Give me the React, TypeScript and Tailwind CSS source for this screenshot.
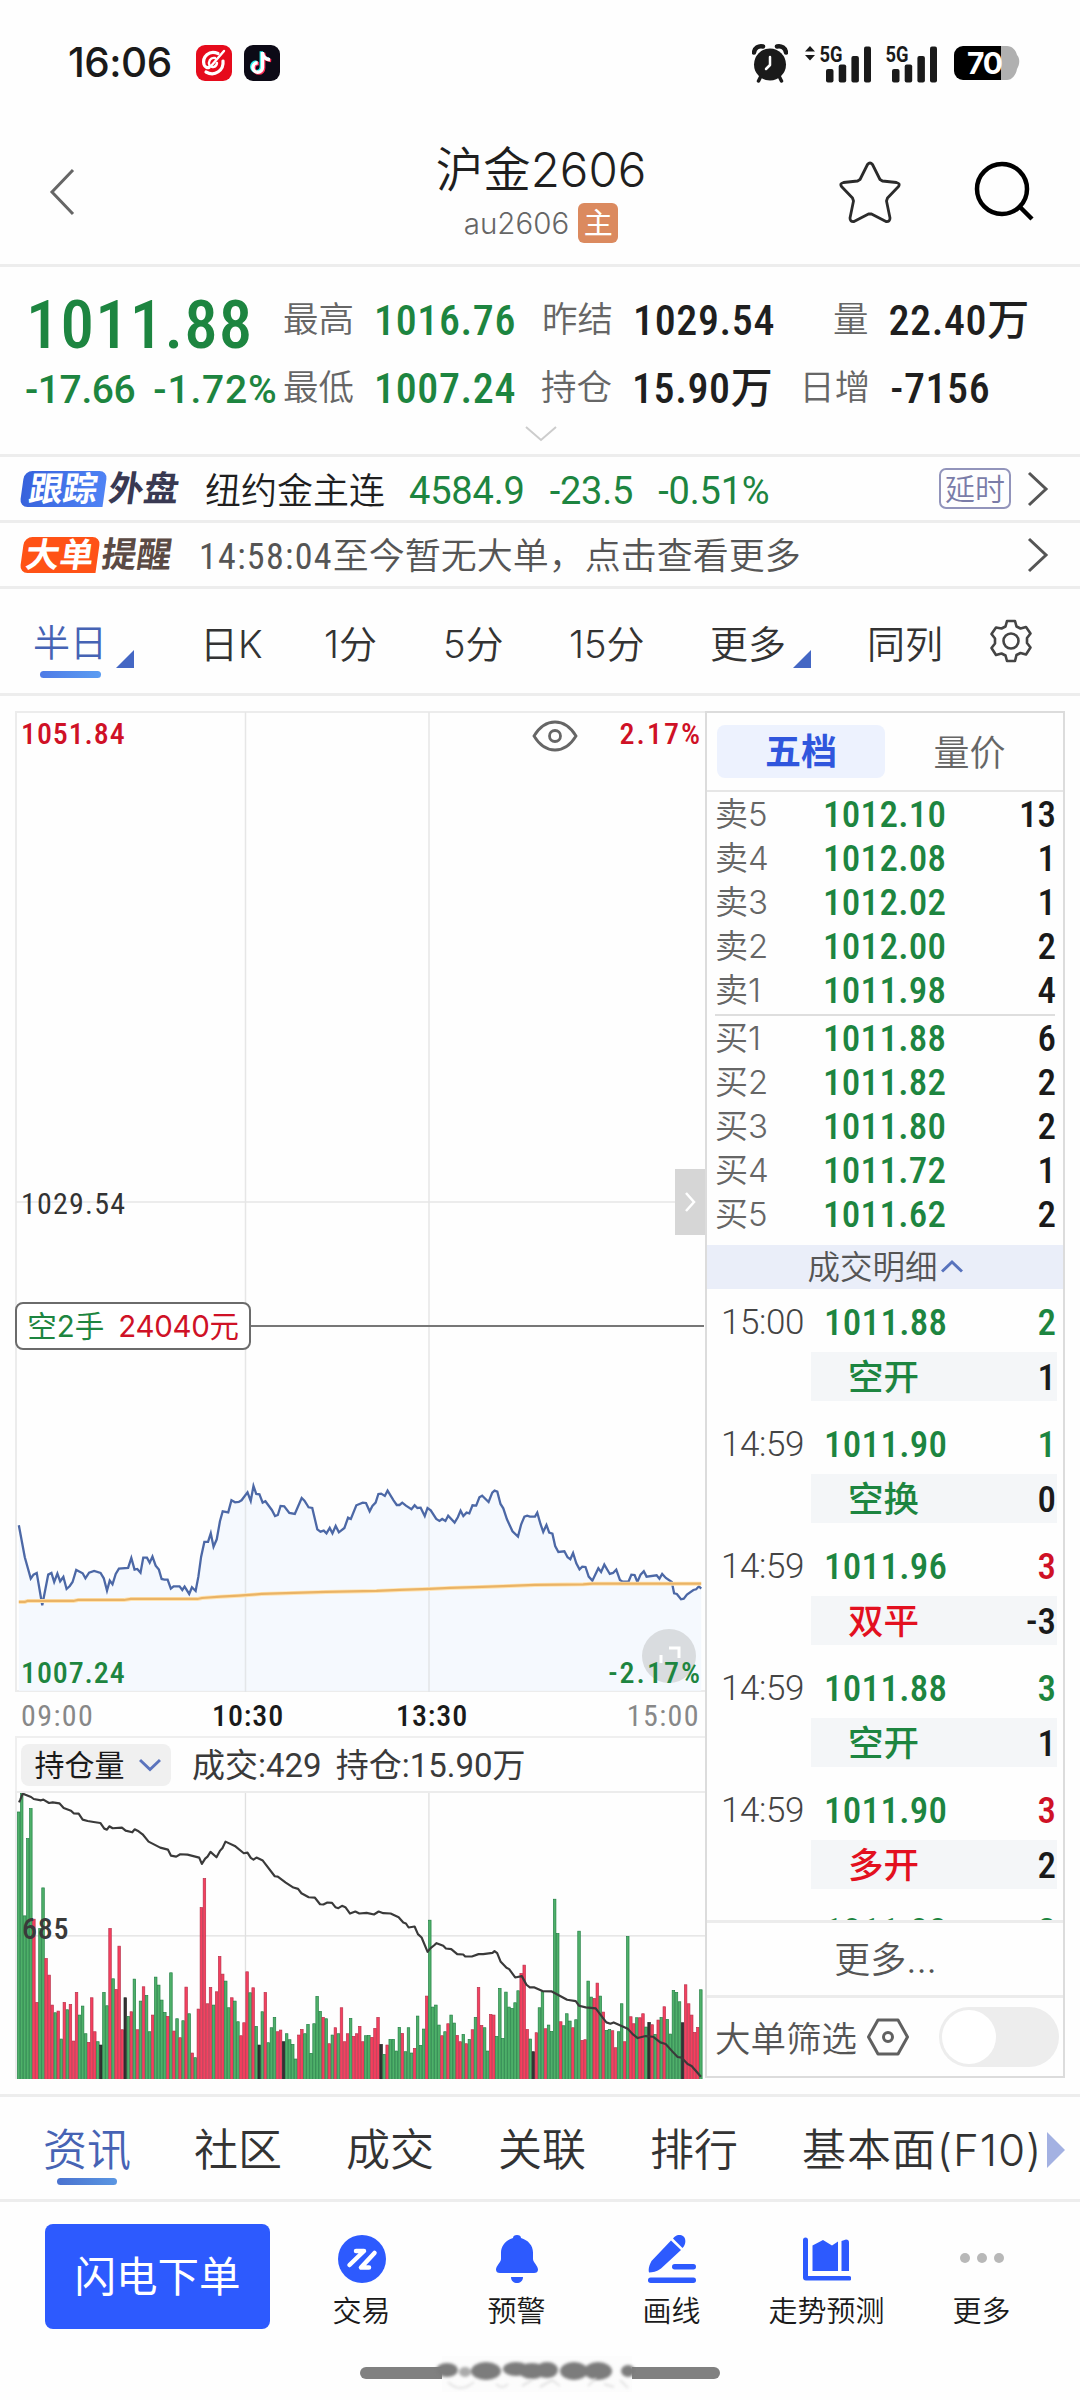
import type { ReactNode } from "react";
import clsx from "clsx";

const GREEN = "text-[#1d8540]";
const RED = "text-[#cf1126]";

interface Level {
    label: string;
    price: string;
    qty: number;
}

interface Tick {
    time: string;
    price: string;
    qty: number;
    qtyUp: boolean;
    kind: string;
    kindUp: boolean;
    change: number;
}

const sells: Level[] = [
    { label: "卖5", price: "1012.10", qty: 13 },
    { label: "卖4", price: "1012.08", qty: 1 },
    { label: "卖3", price: "1012.02", qty: 1 },
    { label: "卖2", price: "1012.00", qty: 2 },
    { label: "卖1", price: "1011.98", qty: 4 },
];

const buys: Level[] = [
    { label: "买1", price: "1011.88", qty: 6 },
    { label: "买2", price: "1011.82", qty: 2 },
    { label: "买3", price: "1011.80", qty: 2 },
    { label: "买4", price: "1011.72", qty: 1 },
    { label: "买5", price: "1011.62", qty: 2 },
];

const ticks: Tick[] = [
    { time: "15:00", price: "1011.88", qty: 2, qtyUp: false, kind: "空开", kindUp: false, change: 1 },
    { time: "14:59", price: "1011.90", qty: 1, qtyUp: false, kind: "空换", kindUp: false, change: 0 },
    { time: "14:59", price: "1011.96", qty: 3, qtyUp: true, kind: "双平", kindUp: true, change: -3 },
    { time: "14:59", price: "1011.88", qty: 3, qtyUp: false, kind: "空开", kindUp: false, change: 1 },
    { time: "14:59", price: "1011.90", qty: 3, qtyUp: true, kind: "多开", kindUp: true, change: 2 },
];

// price line, x = minute position, y = price position
const priceLine =
    "41,766 54,862 67,926 73,914 80,909 92,1006 105,914 112,909 118,936 125,911 131,934 138,921 145,957 152,948 158,936 166,900 180,910 186,925 194,908 205,903 219,909 226,925 233,962 239,932 245,943 252,912 259,896 279,894 286,864 293,899 299,897 306,908 312,863 320,863 326,878 332,860 339,887 346,899 352,927 358,929 365,929 372,956 378,949 391,949 397,960 402,950 412,972 418,952 426,963 432,920 438,860 445,816 453,816 459,790 465,830 472,808 479,754 485,724 497,727 504,691 512,697 520,696 526,691 539,667 546,693 552,648 558,672 565,673 572,698 578,694 592,720 599,738 605,735 611,708 619,709 630,729 642,732 657,684 663,692 672,712 680,714 691,778 698,785 705,782 711,790 718,774 724,790 731,768 738,787 750,774 758,743 764,747 776,706 790,698 797,699 805,724 811,708 818,698 824,672 830,671 838,678 844,662 857,691 864,705 870,705 876,698 884,707 896,718 903,706 909,714 916,713 925,738 931,714 938,721 950,747 957,753 963,747 970,753 976,737 990,758 997,742 1003,722 1009,738 1016,728 1022,730 1029,706 1037,707 1044,682 1050,677 1064,696 1072,668 1077,662 1083,665 1090,702 1096,715 1104,748 1116,784 1128,800 1135,763 1142,740 1148,737 1154,740 1165,740 1170,728 1177,762 1183,786 1190,765 1196,788 1203,791 1209,828 1216,846 1229,844 1236,862 1242,868 1248,849 1255,880 1262,898 1268,890 1275,891 1282,920 1290,932 1303,895 1309,906 1316,884 1328,912 1335,909 1342,899 1350,930 1356,935 1369,934 1375,914 1382,915 1388,936 1395,914 1402,904 1408,920 1430,916 1436,926 1442,912 1450,924 1463,936 1468,970 1474,972 1483,988 1489,986 1496,974 1510,960 1516,958 1522,949 1527,956";

const averageLine =
    "41,996 54,996 60,993 160,993 170,990 270,990 285,987 430,987 440,984 480,980 520,977 570,972 640,969 710,966 820,963 870,960 935,957 980,954 1050,951 1110,948 1165,945 1270,943 1290,941 1527,941";

const interestLine =
    "56,212 60,203 67,186 75,189 92,196 100,202 122,206 129,204 146,214 157,212 177,215 190,229 212,237 220,245 235,246 247,264 262,268 280,271 300,274 312,291 320,294 327,284 337,290 365,288 376,297 396,302 403,293 415,299 427,308 445,330 480,348 503,354 512,372 528,375 540,368 562,369 597,378 605,397 615,381 622,375 631,361 649,377 660,357 667,349 676,330 704,343 731,365 742,363 752,379 760,384 769,378 788,387 824,434 833,435 857,453 880,468 894,472 904,485 926,497 944,498 960,518 970,519 982,513 996,514 1006,527 1015,530 1026,523 1036,527 1050,546 1066,540 1078,546 1100,544 1122,549 1136,540 1150,545 1172,546 1196,557 1210,573 1218,576 1226,588 1244,585 1254,608 1265,618 1283,661 1292,650 1302,642 1310,635 1330,643 1338,651 1354,653 1372,668 1390,669 1396,675 1416,675 1436,668 1450,668 1478,664 1484,659 1492,665 1502,690 1520,709 1528,713 1546,738 1566,734 1580,760 1590,768 1604,768 1628,779 1656,780 1702,805 1728,809 1738,823 1758,828 1788,831 1810,860 1820,873 1832,877 1842,873 1864,883 1884,892 1900,909 1914,920 1938,914 1960,916 1982,933 1998,938 2018,960 2034,977 2046,979 2064,998 2076,1004 2104,1036";

// one entry per minute: top of the bar + colour (g down, r up, k flat)
const volumes = (
    "240g 185g 552g 320g 230g 562r 812r 590g 468g 680r 730r 820r 843g 838r 922g 812r 834g 818r 928r 782r 850g 823g 906g 932r 798r 900r 930g 940k 782g 822g " +
    "590r 741g 773r 643r 894r 798k 854g 840r 742g 894r 808g 765r 791g 900g 850r 736g 760g 805g 842g 854r 723g 898r 861g 918r 867g 766r 846g 964r 978g 832r " +
    "527r 440r 816r 767r 820g 780r 674r 727r 748g 828g 798r 808g 870g 912r 873r 720r 783g 768r 884g 940k 840g 782r 933g 888g 857g 900r 895r 930k 906g 924g " +
    "938g 982g 910r 893r 906g 878g 965g 876g 794g 839g 857r 861g 936r 910g 888r 906g 828r 930r 906r 860g 914r 906r 884r 930r 912g 911g 917r 890r 857r 938k " +
    "968g 940r 923g 923g 958g 887g 905r 960g 888g 964g 950r 853g 941g 892g 793r 565g 826g 820g 880g 912r 900g 876r 850g 874g 911r 930r 908g 936r 923g 894r " +
    "857g 767r 881r 888g 958g 848r 850r 914g 770g 920g 781g 826g 830g 813g 777g 725r 700r 893r 922g 960k 903r 828g 780g 891r 880g 899g 502g 605g 870r 882g " +
    "846g 868g 888r 864g 598g 926r 924r 748g 796g 800r 754r 793g 841r 896g 893g 897r 948r 900g 816g 930r 614g 855r 876r 858g 858r 846r 886g 872k 879r 908g " +
    "865r 857g 825r 863g 907g 776g 782g 810g 873k 759r 816r 850r 902r 887r 774g"
).split(" ");

function Signal({ arrows }: { arrows?: boolean }) {
    return (
        <svg width="66" height="40" viewBox="0 0 66 40" fill="#1a1a1a">
            {arrows && <path d="M0 8.5 5 3l5 5.5zM0 12h10l-5 5.5z" />}
            <text x="14.500" y="18.500" fontFamily="Roboto" fontSize="22" fontWeight="700" textLength="23" lengthAdjust="spacingAndGlyphs">5G</text>
            <rect x="21" y="26" width="7.5" height="13.5" rx="2" />
            <rect x="33.7" y="21.5" width="7.5" height="18" rx="2" />
            <rect x="46.4" y="13" width="7.5" height="26.5" rx="2" />
            <rect x="59" y="3.5" width="7" height="36" rx="2" />
        </svg>
    );
}

function StatusBar() {
    return (
        <div className="flex h-[126px] items-center pl-[68px] pr-[60px]">
            <div className="w-[128px] text-[40.500px] font-[550] tracking-[-0.5px] text-[#1a1a1a]">16:06</div>
            <svg width="36" height="36" viewBox="0 0 36 36" className="mr-3">
                <rect width="36" height="36" rx="9" fill="#e60b1c" />
                <g fill="none" stroke="#fff" strokeWidth="3.2" strokeLinecap="round">
                    <path d="M22 8.500C13 4.500 6 12 8 19.500c1 3 3.500 3.500 5 3" />
                    <path d="M10 27c9 5 18-2 17-11" />
                    <path d="M19 13c-5-1-7 4-5.500 7.500 2.500 3 7 1.500 7.500-2.500M28 6 15 21" strokeWidth="2.400" />
                </g>
            </svg>
            <svg width="36" height="36" viewBox="0 0 36 36">
                <rect width="36" height="36" rx="9" fill="#0c0a16" />
                <g fill="none" strokeWidth="3.4">
                    <path d="M18.500 7v15.500a4.800 4.800 0 1 1-4.800-4.800M18.500 8c.6 4 3.600 6.500 7.500 6.800" stroke="#25f4ee" transform="translate(-1.200 -.8)" />
                    <path d="M18.500 7v15.500a4.800 4.800 0 1 1-4.800-4.800M18.500 8c.6 4 3.600 6.500 7.500 6.800" stroke="#fe2c55" transform="translate(1.200 .8)" />
                    <path d="M18.500 7v15.500a4.800 4.800 0 1 1-4.800-4.800M18.500 8c.6 4 3.600 6.500 7.500 6.800" stroke="#fff" />
                </g>
            </svg>
            <div className="ml-auto flex items-center">
                <svg width="36" height="40" viewBox="0 0 36 40" className="mr-[17px]">
                    <circle cx="18" cy="21.500" r="16" fill="#1a1a1a" />
                    <path d="M2 9.500C2.500 5 6.500 2.500 11 3.500M34 9.500C33.500 5 29.500 2.500 25 3.500" stroke="#1a1a1a" strokeWidth="4.500" strokeLinecap="round" fill="none" />
                    <path d="m9 33-2.500 5M27 33l2.500 5" stroke="#1a1a1a" strokeWidth="3.500" strokeLinecap="round" />
                    <path d="M18 14v8l-4 4" stroke="#fff" strokeWidth="2.500" fill="none" strokeLinecap="round" strokeLinejoin="round" />
                </svg>
                <Signal arrows />
                <Signal />
                <svg width="66" height="40" viewBox="0 0 66 40" className="ml-[17px]">
                    <path d="M47 3h6c5 0 9 4 10 9 3 3 3 9 0 14-1 6-5 11-10 11h-6z" fill="#b0b0b0" />
                    <path d="M9 3h38v34H9a9 9 0 0 1-9-9V12a9 9 0 0 1 9-9z" fill="#000" />
                    <text x="13" y="30.500" fontFamily="Inter" fontSize="30" fontWeight="700" fill="#fff" textLength="36">70</text>
                </svg>
            </div>
        </div>
    );
}

function Header() {
    return (
        <div className="relative flex h-[141px] items-center justify-between border-b-3 border-[#ededed] pl-[48px] pr-[44px]">
            <svg width="28" height="50" viewBox="0 0 28 50" fill="none" stroke="#666" strokeWidth="3" className="mt-[-6px]">
                <path d="M25 3 4 25l21 22" />
            </svg>
            <div className="absolute inset-x-0 top-[10px] flex flex-col items-center pl-[2px]">
                <div className="text-[47.500px] font-[350] leading-[68px] text-[#1f1f1f]">沪金2606</div>
                <div className="-mt-px flex items-center gap-[9px]">
                    <span className="text-[29.500px] font-[350] leading-[40px] text-[#666]">au2606</span>
                    <span className="flex h-[40px] w-[40px] items-center justify-center rounded-[6px] bg-[#db8a5f] text-[29px] leading-none text-white">主</span>
                </div>
            </div>
            <div className="-mt-[6px] flex items-center gap-[73px]">
                <svg width="62" height="62" viewBox="0 0 62 62" fill="none" stroke="#2b2b2b" strokeWidth="2.800" strokeLinejoin="round">
                    <path d="M28.500 3.500q2.500-3 5 0l7.500 15 2.500 1.500 14 1.500q4 1 2 4L48.500 37l-1 3 3.500 17q0 4-4 3.500L32.500 53h-3L15 60.500q-4 .5-4-3.500l3.500-17-1-3L2.500 25.500q-2-3 2-4l14-1.500 2.500-1.500z" />
                </svg>
                <svg width="62" height="62" viewBox="0 0 62 62" fill="none" stroke="#000" strokeWidth="4.500">
                    <circle cx="28" cy="28" r="25" />
                    <path d="m46 46 12 12" />
                </svg>
            </div>
        </div>
    );
}

function Stat({ label, value, tone, className }: { label: string; value: string; tone?: string; className?: string }) {
    return (
        <div className={clsx("flex items-center justify-end gap-[20px]", className)}>
            <span className="text-[35.500px] font-[350] text-[#666]">{label}</span>
            <span className={clsx("text-[42px] font-medium tracking-[0.6px] [font-stretch:87.5%]", tone ?? "text-[#1f1f1f]")}>{value}</span>
        </div>
    );
}

function Quote() {
    return (
        <div className="relative flex h-[190px] border-b-3 border-[#ededed] font-[Roboto,'Noto_Sans_CJK_SC',sans-serif] leading-none">
            <div className={clsx("w-[282px] shrink-0", GREEN)}>
                <div className="mt-[26px] pl-[26px] text-[67px] font-[550] leading-[64px] tracking-[1.100px] [font-stretch:87.5%]">1011.88</div>
                <div className="mt-[13px] flex gap-[18px] whitespace-nowrap pl-[25px] text-[39px] font-medium leading-[40px]">
                    <span className="tracking-[-0.4px]">-17.66</span>
                    <span className="tracking-[0.8px]">-1.72%</span>
                </div>
            </div>
            <div className="mt-[22px] flex flex-col gap-[4px]">
                <div className="flex h-[64px]">
                    <Stat className="w-[234px]" label="最高" value="1016.76" tone={GREEN} />
                    <Stat className="ml-[25px] w-[234px]" label="昨结" value="1029.54" />
                    <Stat className="ml-[58px]" label="量" value="22.40万" />
                </div>
                <div className="flex h-[64px]">
                    <Stat className="w-[234px]" label="最低" value="1007.24" tone={GREEN} />
                    <Stat className="ml-[25px]" label="持仓" value="15.90万" />
                    <Stat className="ml-[26px]" label="日增" value="-7156" />
                </div>
            </div>
            <svg width="34" height="18" viewBox="0 0 34 18" fill="none" stroke="#ccc" strokeWidth="2" className="absolute bottom-[11px] left-[524px]">
                <path d="m2 2 15 13L32 2" />
            </svg>
        </div>
    );
}

function Arrow() {
    return (
        <svg width="24" height="38" viewBox="0 0 24 38" fill="none" stroke="#555" strokeWidth="3">
            <path d="m3 3 17 16L3 35" />
        </svg>
    );
}

function NewsRow({ tag, rest, tagClass, restClass, children }: { tag: string; rest: string; tagClass: string; restClass: string; children: ReactNode }) {
    return (
        <div className="flex h-[66px] items-center border-b-3 border-[#ededed] pl-[22px] pr-[30px]">
            <span className={clsx("flex h-[36px] shrink-0 -skew-x-8 items-center justify-center rounded-l-[8px] rounded-tr-[8px] text-[34px] font-bold leading-none text-white", tagClass)}>{tag}</span>
            <span className={clsx("ml-[4px] shrink-0 -skew-x-8 text-[35px] font-bold leading-none", restClass)}>{rest}</span>
            {children}
            <Arrow />
        </div>
    );
}

function Corner() {
    return (
        <svg width="18" height="18" viewBox="0 0 18 18" fill="#4467c4" className="absolute -right-[25px] bottom-[-4px]">
            <path d="M18 0v18H0z" />
        </svg>
    );
}

function PeriodTabs() {
    return (
        <div className="flex h-[107px] items-center border-b-3 border-[#ededed] pl-[33px] pr-[47px] pt-[5px] text-[38px] font-[350] leading-[40px] text-[#333]">
            <div className="relative w-[167px]">
                <div className="relative w-[76px] text-[37px] text-[#4663b4]">
                    半日
                    <Corner />
                    <div className="absolute -bottom-[14px] left-[7px] h-[7px] w-[61px] rounded-full bg-linear-to-r from-[#4f7be6] to-[#5a9cf2]" />
                </div>
            </div>
            <div className="w-[124px] whitespace-nowrap">日K</div>
            <div className="w-[119px]">1分</div>
            <div className="w-[126px]">5分</div>
            <div className="w-[141px]">15分</div>
            <div className="relative w-[76px]">
                更多
                <Corner />
            </div>
            <div className="ml-[81px] w-[78px]">同列</div>
            <svg width="44" height="44" viewBox="0 0 44 44" fill="none" stroke="#444" strokeWidth="2.600" strokeLinejoin="round" className="ml-auto mt-[-5px]">
                <path d="M18 2h8l1.500 5.500 4 2 5.500-1.500 4.500 6.500-3.500 4.500v5l3.500 4.500-4.500 7-5.500-1.500-4 2L26 42h-8l-1.500-5.500-4-2L7 36l-4.500-7L6 24.500v-5L2.500 15 7 8.500l5.500 1 4-2z" />
                <circle cx="22" cy="22" r="7.500" />
            </svg>
        </div>
    );
}

function PriceChart() {
    return (
        <div className="relative h-[981px] border-y-2 border-l-2 border-[#ececec]">
            <svg width="688" height="981" viewBox="16 711 688 981" className="absolute -left-px -top-[2px]">
                <g stroke="#e6e6e6" strokeWidth="1.500">
                    <path d="M245.500 712v980M429 712v980M16 1202h688" />
                </g>
                <g transform="translate(0 1270) scale(.4592 .3333)">
                    <polygon points={`41,1263 ${priceLine} 1527,1263`} fill="#f3f8fe" fillOpacity=".85" />
                </g>
                <path d="M245.500 1480v212M429 1480v212" stroke="#e3e6e9" strokeWidth="1.500" />
                <g transform="translate(0 1270) scale(.4592 .3333)" fill="none">
                    <polyline points={priceLine} stroke="#4c68a6" strokeWidth="2.300" vectorEffect="non-scaling-stroke" />
                    <polyline points={averageLine} stroke="#ffe3b0" strokeWidth="4" vectorEffect="non-scaling-stroke" />
                    <polyline points={averageLine} stroke="#eab365" strokeWidth="2.200" vectorEffect="non-scaling-stroke" />
                </g>
                <path d="M250 1326h454" stroke="#777" strokeWidth="1.800" />
                <g>
                    <circle cx="669" cy="1656" r="27" fill="#d9dcdf" />
                    <path d="M669 1648h10v10M661 1655v8" stroke="#fff" strokeWidth="3" fill="none" />
                </g>
                <g fill="none" stroke="#666" strokeWidth="2.800">
                    <path d="M534 736q8.500-14 21-14t21 14q-8.500 14-21 14t-21-14z" />
                    <circle cx="555" cy="736" r="5.500" />
                </g>
            </svg>
            <div className="absolute left-[4px] right-[3px] top-[4px] flex justify-between font-[Roboto] text-[30px] font-medium leading-[34px] tracking-[0.900px] [font-stretch:87.5%]">
                <span className={RED}>1051.84</span>
                <span className={clsx("tracking-[2px]", RED)}>2.17%</span>
            </div>
            <div className="absolute left-[4px] top-[474px] font-[Roboto] text-[30px] leading-[34px] tracking-[1.200px] text-[#333] [font-stretch:87.5%]">1029.54</div>
            <div className="absolute right-0 top-[456px] flex h-[66px] w-[30px] items-center justify-center bg-[#d6d6d6]">
                <svg width="14" height="22" viewBox="0 0 14 22" fill="none" stroke="#fff" strokeWidth="2.500"><path d="m3 2 8 9-8 9" /></svg>
            </div>
            <div className="absolute -left-[2px] top-[589px] flex h-[48px] w-[236px] items-center justify-center gap-[14px] whitespace-nowrap rounded-[8px] border-2 border-[#6b6b6b] bg-white pt-px text-[29.500px] leading-none">
                <span className={GREEN}>空2手</span>
                <span className={clsx("tracking-[-0.3px]", RED)}>24040元</span>
            </div>
            <div className={clsx("absolute bottom-0 left-[4px] right-[3px] flex justify-between font-[Roboto] text-[30px] font-medium leading-[34px] tracking-[0.900px] [font-stretch:87.5%]", GREEN)}>
                <span>1007.24</span>
                <span className="tracking-[2px]">-2.17%</span>
            </div>
        </div>
    );
}

function VolumeChart() {
    const bar: Record<string, [string, string]> = {
        g: ["#4fb06a", "#1f7f42"],
        r: ["#f5405f", "#b8304a"],
        k: ["#333", "#222"],
    };
    return (
        <div className="relative h-[288px] border-l-2 border-t-2 border-[#ececec]">
            <svg width="688" height="286" viewBox="51 184 2064 859" className="block">
                <path d="M736 184v859M1287 184v859M48 613h2070" stroke="#e0e0e0" strokeWidth="4" />
                {volumes.map((v, i) => {
                    const top = parseInt(v);
                    const [fill, edge] = bar[v.slice(-1)];
                    return <rect key={i} x={51 + i * 9.147} y={top + 1} width="7.600" height={1043 - top} fill={fill} stroke={edge} strokeWidth="2" />;
                })}
                <polyline points={interestLine} fill="none" stroke="#3a3a3a" strokeWidth="6.500" strokeLinejoin="round" />
            </svg>
            <div className="absolute left-[5px] top-[119px] font-[Roboto] text-[30px] font-medium leading-[34px] tracking-[0.8px] text-[#3a3a3a] [font-stretch:87.5%]">685</div>
        </div>
    );
}

function Levels({ rows }: { rows: Level[] }) {
    return (
        <>
            {rows.map((row) => (
                <div key={row.label} className="flex h-[44px] items-center pl-[8px] pr-[7px] leading-none">
                    <span className="w-[108px] text-[33px] font-[350] text-[#666]">{row.label}</span>
                    <span className={clsx("font-[Roboto] text-[37px] font-medium tracking-[0.3px] [font-stretch:87.5%]", GREEN)}>{row.price}</span>
                    <span className="ml-auto font-[Roboto] text-[37px] font-medium text-[#1a1a1a] [font-stretch:87.5%]">{row.qty}</span>
                </div>
            ))}
        </>
    );
}

function OrderBook() {
    return (
        <div className="flex h-[1367px] w-[360px] flex-col border-2 border-[#dcdcdc]">
            <div className="flex h-[79px] shrink-0 items-center border-b-2 border-[#e6e6e6] pl-[10px] text-[36px] leading-none">
                <div className="flex h-[53px] w-[168px] items-center justify-center rounded-[8px] bg-[#edf2fe] pt-px font-bold text-[#3056dd]">五档</div>
                <div className="flex flex-1 items-center justify-center pr-[9px] pt-[3px] font-[350] text-[#666]">量价</div>
            </div>
            <Levels rows={sells} />
            <div className="mx-[8px] mt-[2px] h-[2px] bg-[#dedede]" />
            <div className="pb-[9px]">
                <Levels rows={buys} />
            </div>
            <div className="flex h-[44px] shrink-0 items-center justify-center gap-[3px] bg-[#eaeef9] pt-[3px] text-[32.500px] font-[350] leading-none text-[#555]">
                成交明细
                <svg width="22" height="14" viewBox="0 0 22 14" fill="none" stroke="#5873bd" strokeWidth="3" className="mt-[-6px]"><path d="M1 12.500 11 3l10 9.500" /></svg>
            </div>
            <div className="h-[631px] shrink-0 overflow-hidden pt-[3px]">
                {ticks.map((t, i) => (
                    <div key={i} className="h-[122px] pl-[14px] pr-[6px] pt-[8px] leading-none">
                        <div className="flex h-[44px] items-center pr-px">
                            <span className="w-[103px] font-[Roboto] text-[35px] font-light tracking-[-0.4px] text-[#444]">{t.time}</span>
                            <span className={clsx("font-[Roboto] text-[37px] font-medium tracking-[0.3px] [font-stretch:87.5%]", GREEN)}>{t.price}</span>
                            <span className={clsx("ml-auto font-[Roboto] text-[37px] font-medium [font-stretch:87.5%]", t.qtyUp ? RED : GREEN)}>{t.qty}</span>
                        </div>
                        <div className="ml-[90px] mt-[8px] flex h-[49px] items-center bg-[#f4f6f8] pl-[37px] pr-px pt-[2px]">
                            <span className={clsx("text-[35.500px] font-medium", t.kindUp ? "text-[#e3101f]" : GREEN)}>{t.kind}</span>
                            <span className="ml-auto font-[Roboto] text-[37px] font-medium text-[#1a1a1a] [font-stretch:87.5%]">{t.change}</span>
                        </div>
                    </div>
                ))}
                <div className="flex h-[44px] items-center pl-[14px] pr-[7px] pt-[14px] font-[Roboto] text-[37px] font-medium leading-none [font-stretch:87.5%]">
                    <span className={clsx("ml-[103px] tracking-[0.3px]", GREEN)}>1011.88</span>
                    <span className={clsx("ml-auto", GREEN)}>2</span>
                </div>
            </div>
            <div className="flex h-[78px] shrink-0 items-center justify-center border-y-3 border-[#ececec] pl-px pt-px text-[36px] font-[350] leading-none text-[#555]">更多...</div>
            <div className="flex flex-1 items-center pl-[8px] pr-[4px]">
                <span className="pt-[5px] text-[35.500px] font-[350] leading-none text-[#555]">大单筛选</span>
                <svg width="42" height="38" viewBox="0 0 42 38" fill="none" stroke="#606060" strokeWidth="3" className="ml-[10px]">
                    <path d="M11 2h20l9.500 17L31 36H11L1.500 19z" strokeLinejoin="round" />
                    <circle cx="21" cy="19" r="4.500" />
                </svg>
                <div className="ml-auto h-[60px] w-[120px] rounded-full bg-[#ededed] p-[3px]">
                    <div className="h-[54px] w-[54px] rounded-full bg-white" />
                </div>
            </div>
        </div>
    );
}

function InfoTabs() {
    return (
        <div className="mt-[15px] flex h-[108px] items-center border-y-3 border-[#ededed] pl-[43px] pt-[3px] text-[44px] font-[350] leading-[50px] text-[#333]">
            <div className="relative w-[151px] text-[#4663b4]">
                资讯
                <div className="absolute -bottom-[10px] left-[14px] h-[7px] w-[60px] rounded-full bg-linear-to-r from-[#4a72cf] to-[#5a96e2]" />
            </div>
            <div className="w-[152px]">社区</div>
            <div className="w-[152px]">成交</div>
            <div className="w-[152px]">关联</div>
            <div className="w-[152px]">排行</div>
            <div className="whitespace-nowrap tracking-[0.9px]">基本面(F10)</div>
            <svg width="18" height="36" viewBox="0 0 18 36" fill="#a3b1e2" className="ml-auto mr-[15px] shrink-0"><path d="M0 0l18 18L0 36z" /></svg>
        </div>
    );
}

function Action({ label, children }: { label: string; children: ReactNode }) {
    return (
        <div className="flex w-[155px] flex-col items-center">
            <svg width="48" height="48" viewBox="0 0 48 48" fill="#2d5afe">{children}</svg>
            <span className="mt-[10px] whitespace-nowrap text-[29px] font-[350] leading-[38px] text-[#1a1a1a]">{label}</span>
        </div>
    );
}

function BottomBar() {
    return (
        <div className="flex h-[148px] pl-[45px] pt-[22px]">
            <button className="h-[105px] w-[225px] rounded-[8px] bg-[#2d5afe] pt-[2px] text-[41.500px] leading-none text-white">闪电下单</button>
            <div className="ml-[14px] flex pt-[11px]">
                <Action label="交易">
                    <circle cx="24" cy="24" r="24" />
                    <path d="M18 16h8L11.500 30M36.500 18 23 32.500h8" fill="none" stroke="#fff" strokeWidth="4.500" strokeLinecap="round" strokeLinejoin="round" />
                </Action>
                <Action label="预警">
                    <path d="M24 0c2.500 0 4 1.200 4 3 7 2 12 7.500 12 14.500V24c0 3 5 7 5 10.500 0 2.500-1.500 3.500-4 3.500H7c-2.500 0-4-1-4-3.500C3 31 8 27 8 24v-6.500C8 10.500 13 5 20 3c0-1.800 1.500-3 4-3zM18 42h12c0 8-12 8-12 0z" />
                </Action>
                <Action label="画线">
                    <path d="M23 5.500 33 15 13 33.500C9 36.500 4 37.500 1 37.500 0 34 1.500 29.500 3.500 26zM25 3.500c4-5 9-4 11-1.500s2 7-1.500 11z" />
                    <rect x="24" y="29" width="24" height="5.500" rx="2.700" />
                    <rect x="0" y="42.500" width="48" height="5.500" rx="2.700" />
                </Action>
                <Action label="走势预测">
                    <path d="M0 5a2.500 2.500 0 0 1 5 0v36h41a2.300 2.300 0 0 1 0 4.600H3a3 3 0 0 1-3-3z" />
                    <path d="M9.500 10.500 20 5l9 5.500L35 6.500v29.500H9.500z" />
                    <path d="M38.500 6 43 4.500q3 0 3 3V36h-7.500z" />
                </Action>
                <Action label="更多">
                    <g fill="#b8b8b8">
                        <circle cx="7" cy="23" r="5" />
                        <circle cx="24" cy="23" r="5" />
                        <circle cx="41" cy="23" r="5" />
                    </g>
                </Action>
            </div>
        </div>
    );
}

function HomeBar() {
    return (
        <svg width="1080" height="50" viewBox="0 0 1080 50">
            <defs>
                <filter id="soft" x="-10%" y="-50%" width="120%" height="200%"><feGaussianBlur stdDeviation="1.800" /></filter>
            </defs>
            <rect x="360" y="17" width="360" height="12" rx="6" fill="#808080" />
            <rect x="442" y="6" width="190" height="36" fill="#fcfcfc" />
            <g fill="#7c7c7c" filter="url(#soft)">
                <ellipse cx="447" cy="20" rx="11" ry="7" />
                <ellipse cx="465" cy="22" rx="6" ry="5" fill="#aaa" />
                <ellipse cx="486" cy="21" rx="15" ry="9" />
                <ellipse cx="516" cy="19" rx="13" ry="7" />
                <ellipse cx="532" cy="21" rx="13" ry="8" />
                <ellipse cx="547" cy="20" rx="11" ry="8" />
                <ellipse cx="574" cy="21" rx="14" ry="9" />
                <ellipse cx="598" cy="21" rx="14" ry="9" />
                <ellipse cx="628" cy="21" rx="7" ry="6" />
            </g>
            <g fill="none" stroke="#d8d8d8" strokeWidth="1.500" filter="url(#soft)">
                <path d="M448 32q12 12 26 0M496 34q6 6 12 0M522 36l10-6M540 37l12-7 8 6M588 36l8-8M604 34l10 3M620 30l8 8" />
            </g>
        </svg>
    );
}

export default function App() {
    return (
        <div className="h-[2400px] w-[1080px] overflow-hidden bg-[#fefefe] font-[Inter,'Noto_Sans_CJK_SC',sans-serif]">
            <StatusBar />
            <Header />
            <Quote />
            <NewsRow tag="跟踪" rest="外盘" tagClass="w-[83px] bg-linear-to-r from-[#3762dc] to-[#4f83f5]" restClass="text-[#393952]">
                <span className="ml-[26px] pt-[5px] text-[36px] font-[350] text-[#1f1f1f]">纽约金主连</span>
                <span className={clsx("ml-[24px] flex gap-[25px] pt-[6px] font-[Roboto] text-[38px] tracking-[-0.2px]", GREEN)}>
                    <span>4584.9</span>
                    <span>-23.5</span>
                    <span>-0.51%</span>
                </span>
                <span className="ml-auto mr-[15px] flex h-[41px] w-[72px] items-center justify-center rounded-[7px] border-2 border-[#9294bb] pt-px text-[30px] font-[350] leading-none text-[#7a7ca8]">延时</span>
            </NewsRow>
            <NewsRow tag="大单" rest="提醒" tagClass="w-[76px] bg-[#ff5216]" restClass="text-[#5b4a44]">
                <span className="ml-[27px] mr-auto whitespace-nowrap pt-[5px] font-[Roboto,'Noto_Sans_CJK_SC',sans-serif] text-[36px] font-[350] text-[#555]">
                    <span className="font-normal tracking-[1.300px] [font-stretch:87.5%]">14:58:04</span>至今暂无大单，点击查看更多
                </span>
            </NewsRow>
            <PeriodTabs />
            <div className="ml-[15px] mt-[15px] flex">
                <div className="w-[690px]">
                    <PriceChart />
                    <div className="flex h-[44px] items-center pl-[6px] pt-[3px] font-[Roboto] text-[30px] leading-none tracking-[1.400px] text-[#888] [font-stretch:87.5%]">
                        <span className="w-[191px]">09:00</span>
                        <span className="w-[184px] font-medium tracking-[0.9px] text-[#1a1a1a]">10:30</span>
                        <span className="font-medium tracking-[0.9px] text-[#1a1a1a]">13:30</span>
                        <span className="ml-auto mr-[5px]">15:00</span>
                    </div>
                    <div className="flex h-[55px] items-center border-l-2 border-t-2 border-[#efefef] pl-[4px] leading-none">
                        <div className="flex h-[42px] w-[150px] items-center justify-center gap-[14px] rounded-[8px] bg-[#f0f0f0] pl-[3px] text-[30px] text-[#1a1a1a]">
                            持仓量
                            <svg width="22" height="14" viewBox="0 0 22 14" fill="none" stroke="#5b74bd" strokeWidth="3"><path d="m1 2 10 9.500L21 2" /></svg>
                        </div>
                        <div className="ml-[21px] flex gap-[14px] pt-[2px] font-[Roboto,'Noto_Sans_CJK_SC',sans-serif] text-[33px] text-[#3a3a3a]">
                            <span>成交:429</span>
                            <span>持仓:15.90万</span>
                        </div>
                    </div>
                    <VolumeChart />
                </div>
                <OrderBook />
            </div>
            <InfoTabs />
            <BottomBar />
            <HomeBar />
        </div>
    );
}
